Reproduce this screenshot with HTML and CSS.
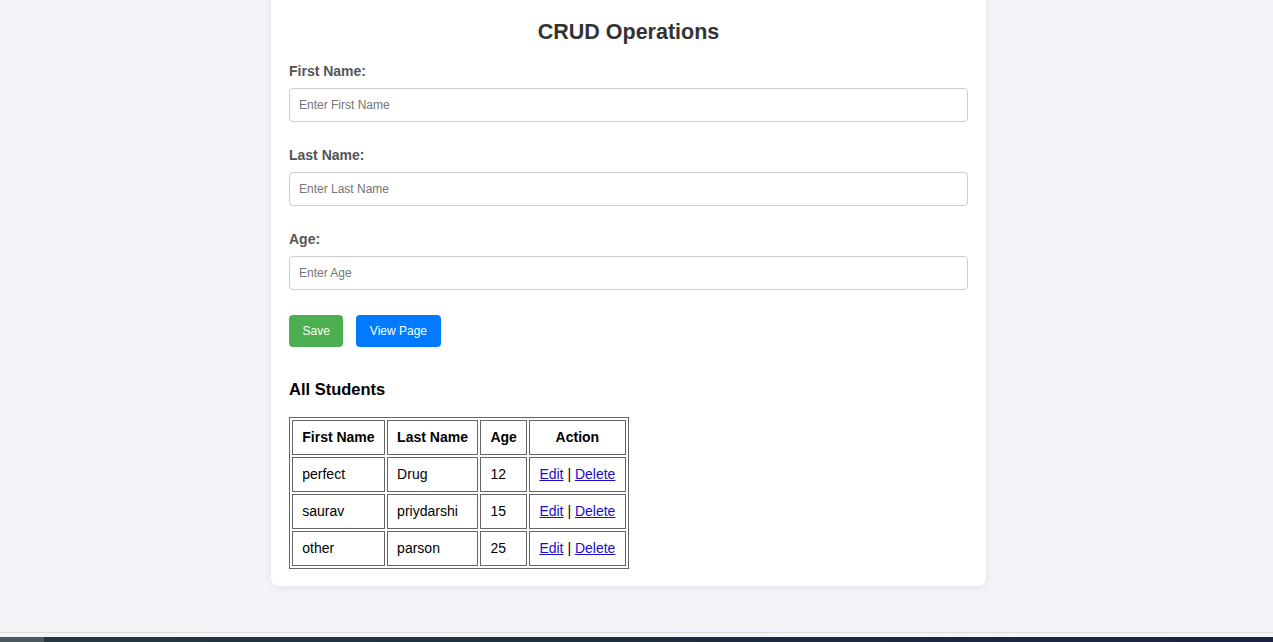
FILE: index.html
```html
<!DOCTYPE html>
<html lang="en">
<head>
<meta charset="utf-8">
<title>CRUD Operations</title>
<link rel="stylesheet" href="styles.css">
</head>
<body>
<div class="page">
  <div class="card">
    <h2 class="title">CRUD Operations</h2>
    <form class="form">
      <div class="field">
        <label class="label" for="fn">First Name:</label>
        <input class="input" id="fn" type="text" placeholder="Enter First Name">
      </div>
      <div class="field">
        <label class="label" for="ln">Last Name:</label>
        <input class="input" id="ln" type="text" placeholder="Enter Last Name">
      </div>
      <div class="field">
        <label class="label" for="age">Age:</label>
        <input class="input" id="age" type="text" placeholder="Enter Age">
      </div>
      <div class="buttons">
        <button type="button" class="btn btn-save">Save</button>
        <button type="button" class="btn btn-view">View Page</button>
      </div>
    </form>
    <h3 class="subtitle">All Students</h3>
    <table class="students">
      <thead>
        <tr><th>First Name</th><th>Last Name</th><th>Age</th><th>Action</th></tr>
      </thead>
      <tbody>
        <tr><td>perfect</td><td>Drug</td><td>12</td><td class="action"><a href="#">Edit</a> | <a href="#">Delete</a></td></tr>
        <tr><td>saurav</td><td>priydarshi</td><td>15</td><td class="action"><a href="#">Edit</a> | <a href="#">Delete</a></td></tr>
        <tr><td>other</td><td>parson</td><td>25</td><td class="action"><a href="#">Edit</a> | <a href="#">Delete</a></td></tr>
      </tbody>
    </table>
  </div>
</div>
<div class="footer">
  <div class="bar"><div class="bar-start"></div><div class="bar-rest"></div></div>
</div>
</body>
</html>
```

FILE: styles.css
```css
* { box-sizing: border-box; }
html, body { margin: 0; padding: 0; }
body {
  background: #f4f4f9;
  font-family: "Liberation Sans", Arial, sans-serif;
  height: 642px;
  display: flex;
  flex-direction: column;
  overflow: hidden;
}
.page {
  flex: 1;
  display: flex;
  justify-content: center;
  align-items: flex-start;
  padding-right: 16px;
}
.card {
  width: 715px;
  margin-top: -20px;
  background: #fff;
  border-radius: 8px;
  box-shadow: 0 2px 10px rgba(0, 0, 0, 0.08);
  padding: 20px 18px 17px;
  display: flex;
  flex-direction: column;
}
.title {
  margin: 19px 0 0;
  font-size: 21.5px;
  line-height: 26px;
  text-align: center;
  color: #333;
}
.form {
  display: flex;
  flex-direction: column;
  margin-top: 18px;
}
.field {
  display: flex;
  flex-direction: column;
  margin-bottom: 25px;
}
.label {
  font-size: 14px;
  line-height: 16px;
  font-weight: bold;
  color: #555;
  margin-bottom: 9px;
}
.input {
  height: 34px;
  padding: 0 9px;
  border: 1px solid #ccc;
  border-radius: 4px;
  font-family: "Liberation Sans", Arial, sans-serif;
  font-size: 12px;
  color: #333;
  background: #fff;
}
.input::placeholder { color: #757575; }
.buttons {
  display: flex;
  gap: 13px;
}
.btn {
  height: 32px;
  padding: 0 13.5px;
  border: none;
  border-radius: 4px;
  color: #fff;
  font-family: "Liberation Sans", Arial, sans-serif;
  font-size: 12px;
  white-space: nowrap;
}
.btn-save { background: #4caf50; }
.btn-view { background: #007bff; }
.subtitle {
  margin: 32px 0 0;
  font-size: 16.5px;
  line-height: 20px;
  color: #000;
}
.students {
  margin-top: 18px;
  align-self: flex-start;
  border: 1px solid #666;
  border-spacing: 2px;
  font-size: 14px;
  color: #000;
}
.students th, .students td {
  border: 1px solid #666;
  padding: 8px 9.25px;
  line-height: 17px;
  text-align: left;
}
.students th { text-align: center; }
.students td.action { text-align: center; }
.students a { color: #1a0dcc; }
.footer {
  height: 10px;
  border-top: 1px solid #dcdcdc;
  padding-top: 4px;
  display: flex;
  flex-direction: column;
}
.bar {
  flex: 1;
  display: flex;
}
.bar-start { width: 44px; background: #4b5a60; }
.bar-rest { flex: 1; background: linear-gradient(90deg, #24393f, #1d2a3e 60%, #1b2242); }
```
